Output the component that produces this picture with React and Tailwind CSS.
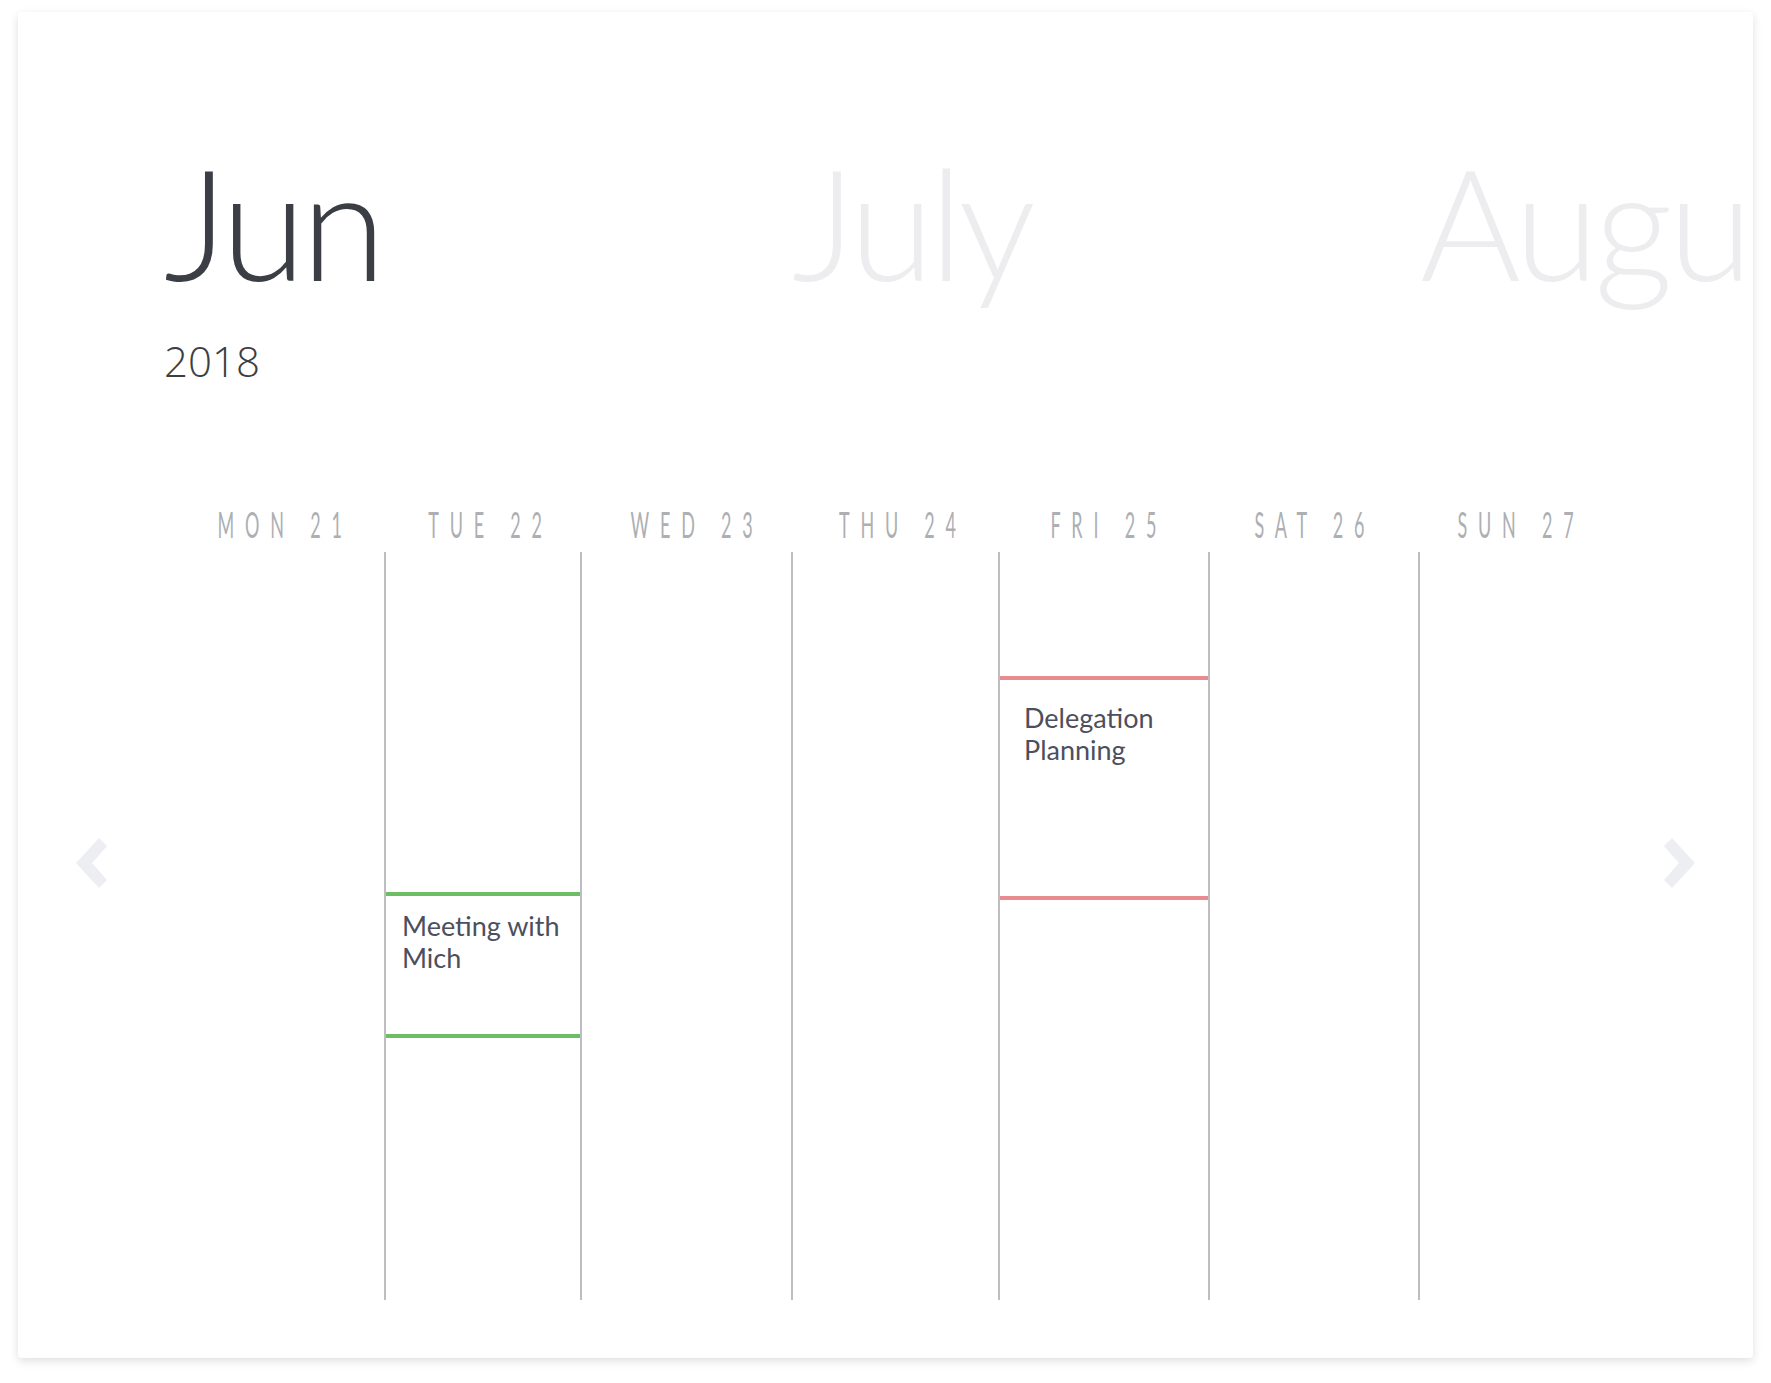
import React from 'react';

const months = [
  { name: 'Jun', year: '2018', active: true },
  { name: 'July' },
  { name: 'August' },
];

const days = ['MON 21', 'TUE 22', 'WED 23', 'THU 24', 'FRI 25', 'SAT 26', 'SUN 27'];

// events sit on the day column at their time slot
const events = {
  1: [{ title: 'Meeting with Mich', top: 340, height: 146, color: 'border-[#6cbd64]', pad: 'pl-[16px] pt-[14px]' }],
  4: [{ title: 'Delegation Planning', top: 124, height: 224, color: 'border-[#e88c8f]', pad: 'pl-[24px] pt-[22px]' }],
};

const Chevron = ({ dir }) => (
  <svg width="32" height="50" viewBox="0 0 32 50" className="fill-[#eceef1]">
    {dir === 'left' ? (
      <polygon points="0,25 23,0 31,8 16,25 31,42 23,50" />
    ) : (
      <polygon points="32,25 9,0 1,8 16,25 1,42 9,50" />
    )}
  </svg>
);

const App = () => {
  return (
    <div className="min-h-screen bg-white pt-[12px] pl-[18px]">
      <div className="relative w-[1735px] h-[1346px] bg-white rounded shadow-[0_3px_10px_rgba(0,0,0,0.13)] overflow-hidden">
        {/* month strip */}
        <div className="flex pl-[146px] pt-[133px] whitespace-nowrap">
          {months.map((m) => (
            <div key={m.name} className="w-[628px] shrink-0">
              <div
                className={`font-['Lato',sans-serif] font-light text-[154px] tracking-[-0.03em] leading-none ${
                  m.active ? 'text-[#3b3e44]' : 'text-[#ededef]'
                }`}
              >
                {m.name}
              </div>
              {m.year && (
                <div className="mt-[41px] font-['Open_Sans',sans-serif] font-light text-[42px] leading-none text-[#3b3e44]">
                  {m.year}
                </div>
              )}
            </div>
          ))}
        </div>

        {/* day headers */}
        <div className="mt-[124px] ml-[164px] grid grid-cols-7 w-[1442px]">
          {days.map((d) => (
            <div key={d} className="flex justify-center whitespace-nowrap">
              <span className="shrink-0 inline-block scale-x-50 tracking-[0.6em] font-['Lato',sans-serif] text-[36px] leading-none text-[#adafb3]">
                {d}
              </span>
            </div>
          ))}
        </div>

        {/* day columns */}
        <div className="mt-[10px] ml-[156px] grid grid-cols-[210px_196px_211px_207px_210px_210px_210px] h-[748px]">
          {days.map((d, i) => (
            <div key={d} className={`relative ${i > 0 ? 'border-l-2 border-[#bcbec1]' : ''}`}>
              {(events[i] || []).map((ev) => (
                <div
                  key={ev.title}
                  className={`absolute left-0 right-0 border-y-4 ${ev.color} ${ev.pad}`}
                  style={{ top: ev.top, height: ev.height }}
                >
                  <p className="font-['Lato',sans-serif] text-[27px] leading-[32px] text-[#4c4f5d] pr-2">
                    {ev.title}
                  </p>
                </div>
              ))}
            </div>
          ))}
        </div>

        <button className="absolute left-[58px] top-[826px]">
          <Chevron dir="left" />
        </button>
        <button className="absolute left-[1645px] top-[826px]">
          <Chevron dir="right" />
        </button>
      </div>
    </div>
  );
};

export default App;
